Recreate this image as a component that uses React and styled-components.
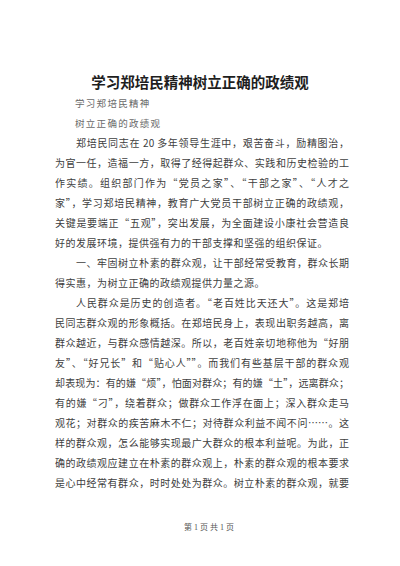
import React from "react";
import styled, { createGlobalStyle } from "styled-components";

const GlobalStyle = createGlobalStyle`
  html, body {
    margin: 0;
    padding: 0;
    background: #ffffff;
  }
  body {
    font-family: "Noto Sans CJK SC", "Noto Sans", sans-serif;
  }
`;

const paragraphs = [
  {
    lines: [
      "郑培民同志在 20 多年领导生涯中，艰苦奋斗，励精图治，",
      "为官一任，造福一方，取得了经得起群众、实践和历史检验的工",
      "作实绩。组织部门作为“党员之家”、“干部之家”、“人才之",
      "家”，学习郑培民精神，教育广大党员干部树立正确的政绩观，",
      "关键是要端正“五观”，突出发展，为全面建设小康社会营造良",
      "好的发展环境，提供强有力的干部支撑和坚强的组织保证。",
    ],
  },
  {
    lines: [
      "一、牢固树立朴素的群众观，让干部经常受教育，群众长期",
      "得实惠，为树立正确的政绩观提供力量之源。",
    ],
  },
  {
    open: true,
    lines: [
      "人民群众是历史的创造者。“老百姓比天还大”。这是郑培",
      "民同志群众观的形象概括。在郑培民身上，表现出职务越高，离",
      "群众越近，与群众感情越深。所以，老百姓亲切地称他为“好朋",
      "友”、“好兄长”和“贴心人””。而我们有些基层干部的群众观",
      "却表现为：有的嫌“烦”，怕面对群众；有的嫌“土”，远离群众；",
      "有的嫌“刁”，绕着群众；做群众工作浮在面上；深入群众走马",
      "观花；对群众的疾苦麻木不仁；对待群众利益不闻不问……。这",
      "样的群众观，怎么能够实现最广大群众的根本利益呢。为此，正",
      "确的政绩观应建立在朴素的群众观上，朴素的群众观的根本要求",
      "是心中经常有群众，时时处处为群众。树立朴素的群众观，就要",
    ],
  },
];

const Page = styled.div`
  width: 400px;
  height: 566px;
  overflow: hidden;
  background: #ffffff;
  display: flex;
  flex-direction: column;
`;

const Title = styled.h1`
  margin: 71px 0 0;
  font-size: 14.5px;
  line-height: 22px;
  font-weight: 700;
  color: #1e1e1e;
  text-align: center;
  letter-spacing: 0;
`;

const Subtitle = styled.div`
  margin-left: 75px;
  font-size: 9.5px;
  line-height: 20px;
  letter-spacing: 1.3px;
  color: #6a6a6a;
`;

const Body = styled.div`
  width: 294px;
  margin-left: 55px;
  display: flex;
  flex-direction: column;
`;

const Line = styled.div`
  font-size: 10px;
  line-height: 20px;
  color: #404040;
  white-space: nowrap;
  padding-left: ${(p) => (p.$indent ? "21px" : "0")};
  text-align: ${(p) => (p.$full ? "justify" : "left")};
  text-align-last: ${(p) => (p.$full ? "justify" : "left")};
  letter-spacing: ${(p) => (p.$full ? "0" : "0.5px")};
`;

const Footer = styled.div`
  margin-top: 29px;
  padding-left: 18px;
  text-align: center;
  font-family: "Liberation Serif", "Noto Sans CJK SC", serif;
  font-size: 8px;
  line-height: 12px;
  color: #555555;
`;

export default function App() {
  return (
    <>
      <GlobalStyle />
      <Page>
        <Title>学习郑培民精神树立正确的政绩观</Title>
        <Subtitle>学习郑培民精神</Subtitle>
        <Subtitle>树立正确的政绩观</Subtitle>
        <Body>
          {paragraphs.map((para, pi) =>
            para.lines.map((text, li) => {
              const isLast = li === para.lines.length - 1;
              return (
                <Line
                  key={`${pi}-${li}`}
                  $indent={li === 0}
                  $full={!isLast || para.open}
                >
                  {text}
                </Line>
              );
            })
          )}
        </Body>
        <Footer>第 1 页 共 1 页</Footer>
      </Page>
    </>
  );
}
